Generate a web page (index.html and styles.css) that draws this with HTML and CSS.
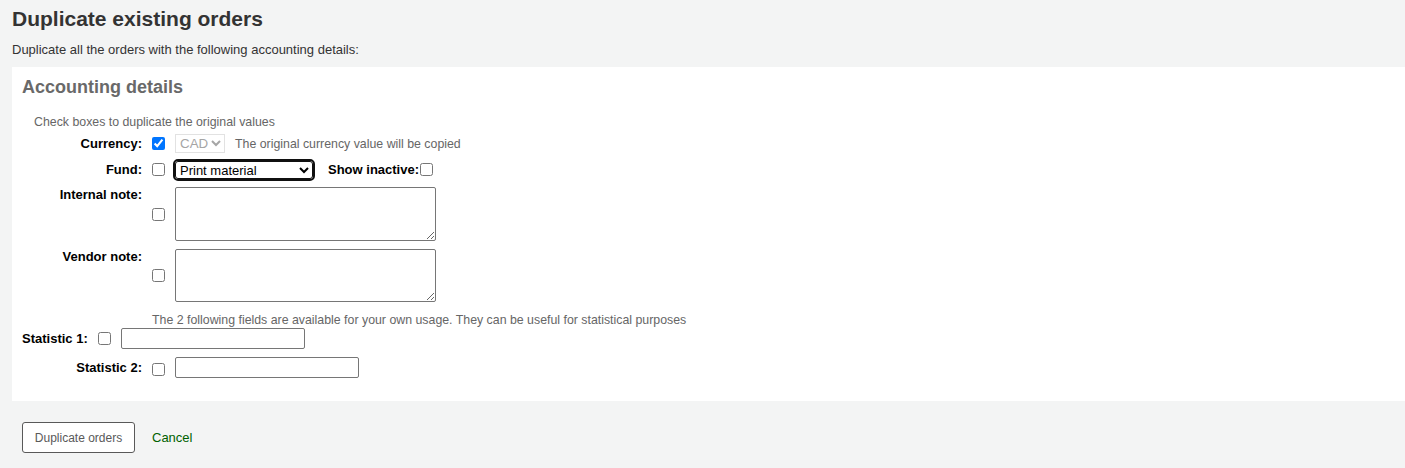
FILE: index.html
```html
<!DOCTYPE html>
<html lang="en">
<head>
<meta charset="utf-8">
<title>Duplicate existing orders</title>
<link rel="stylesheet" href="styles.css">
</head>
<body>
<main class="page">
  <h1 class="title">Duplicate existing orders</h1>
  <p class="intro">Duplicate all the orders with the following accounting details:</p>
  <form class="dup-form">
    <section class="panel">
      <h2 class="panel-title">Accounting details</h2>
      <p class="hint hint-top">Check boxes to duplicate the original values</p>
      <ol class="rows">
        <li class="row">
          <label class="lbl">Currency:</label>
          <input class="cb" type="checkbox" checked>
          <select class="sel sel-cad" disabled><option>CAD</option></select>
          <span class="hint hint-inline">The original currency value will be copied</span>
        </li>
        <li class="row row-fund">
          <label class="lbl">Fund:</label>
          <input class="cb" type="checkbox">
          <select class="sel sel-fund"><option>Print material</option></select>
          <label class="lbl-inline">Show inactive:</label>
          <input class="cb cb-tight" type="checkbox">
        </li>
        <li class="row row-area">
          <label class="lbl lbl-top">Internal note:</label>
          <input class="cb" type="checkbox">
          <textarea class="area"></textarea>
        </li>
        <li class="row row-area">
          <label class="lbl lbl-top">Vendor note:</label>
          <input class="cb" type="checkbox">
          <textarea class="area"></textarea>
        </li>
        <li class="note-row">
          <span class="hint">The 2 following fields are available for your own usage. They can be useful for statistical purposes</span>
        </li>
        <li class="row row-stat1">
          <label class="lbl lbl-free">Statistic 1:</label>
          <input class="cb" type="checkbox">
          <input class="txt" type="text">
        </li>
        <li class="row row-stat2">
          <label class="lbl">Statistic 2:</label>
          <input class="cb cb-low" type="checkbox">
          <input class="txt" type="text">
        </li>
      </ol>
    </section>
    <div class="actions">
      <button type="button" class="btn">Duplicate orders</button>
      <a class="cancel" href="#">Cancel</a>
    </div>
  </form>
</main>
</body>
</html>
```

FILE: styles.css
```css
* { box-sizing: border-box; }
html, body { margin: 0; padding: 0; }
body {
  background: #f3f4f4;
  font-family: "Liberation Sans", Arial, sans-serif;
  font-size: 13px;
  color: #333;
}
.page {
  padding: 0 0 0 12px;
}
.title {
  margin: 0;
  padding-top: 6px;
  font-size: 21px;
  line-height: 26px;
  font-weight: bold;
  color: #333;
}
.intro {
  margin: 10px 0 0;
  font-size: 13px;
  line-height: 16px;
  color: #333;
}
.dup-form { margin-top: 9px; }
.panel {
  background: #fff;
  padding: 10px 10px 23px 10px;
}
.panel-title {
  margin: 0;
  font-size: 18px;
  line-height: 20px;
  color: #696969;
  font-weight: bold;
}
.hint {
  color: #666;
  font-size: 12.35px;
}
.hint-top {
  margin: 18px 0 0 12px;
  line-height: 14px;
}
.rows {
  list-style: none;
  margin: 0;
  padding: 0;
}
.row {
  display: flex;
  align-items: center;
}
.lbl {
  width: 120px;
  flex: none;
  text-align: right;
  font-weight: bold;
  color: #000;
  font-size: 13px;
}
.lbl-free { width: auto; }
.lbl-top { align-self: flex-start; padding-top: 0; }
.cb {
  margin: 0 0 0 10px;
  width: 13px;
  height: 13px;
  flex: none;
}
.cb-tight { margin-left: 1px; }
.sel {
  margin-left: 10px;
  font-family: "Liberation Sans", Arial, sans-serif;
  font-size: 13px;
  height: 19px;
  background-color: #fff;
}
.sel-cad { width: 50px; font-size: 13.33px; }
.sel-fund {
  width: 138px;
  height: 18px;
  outline: 2px solid #101010;
  outline-offset: 0;
  border-radius: 3px;
  border-color: #101010;
  color: #000;
}
.hint-inline { margin-left: 10px; }
.row:first-child { margin-top: 4px; height: 21px; }
.row-fund { margin-top: 5px; height: 21px; }
.lbl-inline {
  margin-left: 15px;
  font-weight: bold;
  color: #000;
}
.row-area { margin-top: 7px; }
.row-area + .row-area { margin-top: 8px; }
.row-area .lbl { margin-top: 0; line-height: 15px; }
.area {
  margin-left: 10px;
  width: 261px;
  height: 54px;
  font-family: "Liberation Sans", Arial, sans-serif;
  font-size: 13px;
  border: 1px solid #767676;
  border-radius: 2px;
}
.row-area + .row-area .area { height: 53px; }
.note-row {
  padding-left: 130px;
  margin-top: 11px;
  line-height: 14px;
}
.row-stat1 { margin-top: 1px; }
.row-stat2 { margin-top: 8px; }
.txt {
  margin-left: 10px;
  width: 184px;
  height: 21px;
  border: 1px solid #767676;
  border-radius: 2px;
  font-size: 13px;
}
.cb-low { position: relative; top: 2px; }
.actions {
  display: flex;
  align-items: center;
  padding: 21px 0 16px 10px;
}
.btn {
  width: 113px;
  height: 31px;
  background: #fff;
  border: 1px solid #595959;
  border-radius: 3px;
  color: #595959;
  font-family: "Liberation Sans", Arial, sans-serif;
  font-size: 12px;
}
.cancel {
  margin-left: 17px;
  color: #006100;
  text-decoration: none;
  font-size: 13px;
}
```
